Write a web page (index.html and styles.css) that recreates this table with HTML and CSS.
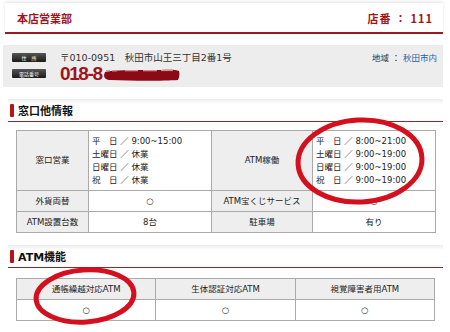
FILE: index.html
```html
<!DOCTYPE html>
<html lang="ja">
<head>
<meta charset="utf-8">
<link rel="stylesheet" href="styles.css">
</head>
<body>
<div class="page">
  <div class="shop-head">
    <span class="shop-name">本店営業部</span>
    <span class="shop-no">店番 ： 111</span>
  </div>

  <div class="info">
    <div class="info-row">
      <span class="badge">住　所</span>
      <span class="addr">〒010-0951　秋田市山王三丁目2番1号</span>
      <span class="area">地域 ： <span class="area-link">秋田市内</span></span>
    </div>
    <div class="info-row">
      <span class="badge">電話番号</span>
      <span class="tel">018-8</span>
      <svg class="redact" width="78" height="16" viewBox="0 0 78 16">
        <path d="M2 5 C10 3 30 3 50 3 C62 3 72 2 76 4 C77 7 76 11 75 13 C60 14 30 14 8 13 C3 13 1 11 1 8 Z" fill="#8a0b16"/>
        <rect x="3" y="3.2" width="4" height="1.3" fill="#d98a90"/>
        <rect x="9" y="3.2" width="5" height="1.3" fill="#d98a90"/>
        <rect x="22" y="3" width="13" height="1.3" fill="#d98a90"/>
        <rect x="40" y="3" width="14" height="1.3" fill="#d98a90"/>
        <rect x="58" y="2.8" width="12" height="1.3" fill="#d98a90"/>
      </svg>
    </div>
  </div>

  <div class="sec-head sec-first"><span class="sec-bar"></span><span class="sec-title">窓口他情報</span></div>

  <table class="grid t1">
    <colgroup><col class="c1"><col class="c2"><col class="c3"><col class="c4"></colgroup>
    <tr class="r-tall">
      <th>窓口営業</th>
      <td class="hours">平　日 ／ 9:00~15:00<br>土曜日 ／ 休業<br>日曜日 ／ 休業<br>祝　日 ／ 休業</td>
      <th>ATM稼働</th>
      <td class="hours">平　日 ／ 8:00~21:00<br>土曜日 ／ 9:00~19:00<br>日曜日 ／ 9:00~19:00<br>祝　日 ／ 9:00~19:00</td>
    </tr>
    <tr>
      <th>外貨両替</th>
      <td class="mark">○</td>
      <th>ATM宝くじサービス</th>
      <td class="mark">○</td>
    </tr>
    <tr>
      <th>ATM設置台数</th>
      <td class="mark">8台</td>
      <th>駐車場</th>
      <td class="mark">有り</td>
    </tr>
  </table>

  <div class="sec-head sec-second"><span class="sec-bar"></span><span class="sec-title">ATM機能</span></div>

  <table class="grid t2">
    <tr>
      <th>通帳繰越対応ATM</th>
      <th>生体認証対応ATM</th>
      <th>視覚障害者用ATM</th>
    </tr>
    <tr>
      <td class="mark">○</td>
      <td class="mark">○</td>
      <td class="mark">○</td>
    </tr>
  </table>

  <svg class="marks" width="450" height="332" viewBox="0 0 450 332">
    <ellipse cx="360" cy="161" rx="62" ry="41" fill="none" stroke="#d4101e" stroke-width="5" transform="rotate(-3 360 161)"/>
    <ellipse cx="85" cy="296" rx="49" ry="26" fill="none" stroke="#d4101e" stroke-width="5" transform="rotate(-4 85 296)"/>
  </svg>
</div>
</body>
</html>
```

FILE: styles.css
```css
* { box-sizing: border-box; }
html, body { margin: 0; padding: 0; background: #fff; }
body {
  font-family: "DejaVu Sans", "Noto Sans CJK JP", sans-serif;
  color: #222;
  font-size: 10px;
}
.page {
  position: relative;
  width: 450px;
  height: 332px;
  overflow: hidden;
  padding-top: 3px;
}
.shop-head {
  margin: 0 7px 0 5px;
  height: 31px;
  display: flex;
  align-items: center;
  justify-content: space-between;
  padding: 0 10px 0 12px;
  border-bottom: 2px solid #9a1b1f;
  box-shadow: 0 -1px 3px rgba(0,0,0,0.12);
  background: #fff;
}
.shop-name, .shop-no {
  color: #a0141c;
  font-weight: bold;
  font-size: 11px;
  font-family: "Noto Sans CJK JP", sans-serif;
}
.shop-no { letter-spacing: 1px; }
.info {
  margin: 11px 7px 0 3px;
  height: 42px;
  background: #ededed;
  padding: 4px 5px 0 9px;
  display: flex;
  flex-direction: column;
}
.info-row {
  display: flex;
  align-items: center;
  height: 16px;
}
.info-row + .info-row { height: 19px; margin-top: -1px; }
.badge {
  width: 34px;
  height: 9px;
  background: linear-gradient(#555, #1a1a1a);
  color: #fff;
  font-size: 5px;
  line-height: 9px;
  text-align: center;
  margin-right: 14px;
  flex: none;
  border-radius: 1px;
  font-family: "Noto Sans CJK JP", sans-serif;
}
.addr { font-size: 9.5px; color: #333; }
.area { margin-left: auto; margin-right: 1px; font-size: 8.5px; color: #333; }
.area-link { color: #1f5ea8; }
.tel {
  color: #a0141c;
  font-weight: bold;
  font-size: 19px;
  line-height: 20px;
  letter-spacing: -1.4px;
  font-family: "Liberation Sans", "Noto Sans", sans-serif;
}
.redact { margin-left: 1px; margin-top: 3px; }
.sec-head {
  margin: 0 7px 0 8px;
  height: 23px;
  display: flex;
  align-items: center;
  padding-left: 2px;
  border-bottom: 1px solid #8a2a2a;
  background: linear-gradient(#ececec, #fff 5px);
}
.sec-first { margin-top: 12px; }
.sec-second { margin-top: 12px; }
.sec-bar {
  width: 4px;
  height: 13px;
  background: #b2161c;
  border-radius: 1px;
  margin-right: 4px;
}
.sec-title { font-weight: bold; font-size: 11px; color: #111; font-family: "DejaVu Sans", "Noto Sans CJK JP", sans-serif; }
.grid {
  border-collapse: collapse;
  margin-left: 16px;
  width: 419px;
  table-layout: fixed;
}
.t1 { margin-top: 8px; }
.t2 { margin-top: 10px; }
.grid th, .grid td {
  border: 1px solid #aaa;
  font-size: 8.5px;
  font-weight: normal;
  color: #222;
  padding: 0 3px;
  height: 21px;
  line-height: 13px;
}
.grid th { background: #eeeeee; text-align: center; }
.grid td.mark { text-align: center; background: #fff; }
.c1 { width: 72px; }
.c2 { width: 123px; }
.c3 { width: 101px; }
.c4 { width: 123px; }
.t1 tr.r-tall th, .t1 tr.r-tall td { height: 60px; }
.hours { line-height: 13px; padding: 2px 4px 3px; text-align: left; background: #fff; white-space: nowrap; }
.marks {
  position: absolute;
  left: 0;
  top: 0;
  pointer-events: none;
}
```
